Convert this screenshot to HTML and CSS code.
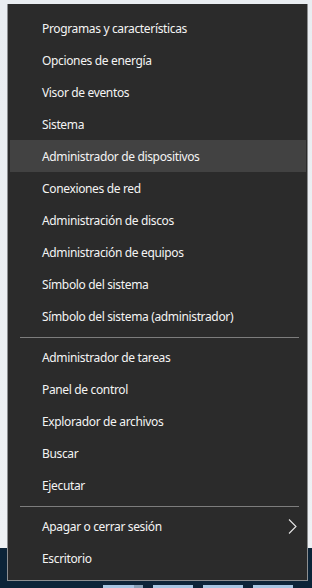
FILE: index.html
```html
<!DOCTYPE html>
<html lang="es">
<head>
<meta charset="utf-8">
<title>Menú</title>
<link rel="stylesheet" href="styles.css">
</head>
<body>
<div class="screen">
  <div class="menu">
    <ul class="group">
      <li class="item">Programas y características</li>
      <li class="item">Opciones de energía</li>
      <li class="item">Visor de eventos</li>
      <li class="item">Sistema</li>
      <li class="item active">Administrador de dispositivos</li>
      <li class="item">Conexiones de red</li>
      <li class="item">Administración de discos</li>
      <li class="item">Administración de equipos</li>
      <li class="item">Símbolo del sistema</li>
      <li class="item">Símbolo del sistema (administrador)</li>
    </ul>
    <div class="sep"></div>
    <ul class="group">
      <li class="item">Administrador de tareas</li>
      <li class="item">Panel de control</li>
      <li class="item">Explorador de archivos</li>
      <li class="item">Buscar</li>
      <li class="item">Ejecutar</li>
    </ul>
    <div class="sep"></div>
    <ul class="group">
      <li class="item has-sub">Apagar o cerrar sesión
        <svg class="chev" width="9" height="15" viewBox="0 0 9 15"><path d="M1 0.5 L8 7.5 L1 14.5" fill="none" stroke="#e6e6e6" stroke-width="1.1"/></svg>
      </li>
      <li class="item">Escritorio</li>
    </ul>
  </div>
  <div class="taskbar">
    <span class="tb tb1"></span>
    <span class="tb"></span>
    <span class="tb"></span>
    <span class="tb"></span>
  </div>
</div>
</body>
</html>
```

FILE: styles.css
```css
* { box-sizing: border-box; }
html, body { margin: 0; padding: 0; }
body { background: #0c2438; }
.screen {
  width: 312px;
  height: 588px;
  overflow: hidden;
  display: flex;
  flex-direction: column;
  background:
    linear-gradient(to bottom, #e9edf1 0, #eef1f4 548px, #0c2438 548px, #0c2438 100%);
  padding-top: 4px;
}
.menu {
  margin: 0 4px 0 7px;
  height: 578px;
  background: #2b2b2b;
  border: 1px solid #8d8f91;
  border-top: 0;
  padding: 8px 1px 0 2px;
  font-family: "Noto Sans", "Open Sans", sans-serif;
  font-size: 12px;
  letter-spacing: -0.35px;
  color: #f4f4f4;
}
.group { list-style: none; margin: 0; padding: 0; }
.item {
  height: 32px;
  display: flex;
  align-items: center;
  padding-left: 32px;
  padding-right: 8px;
  white-space: nowrap;
}
.item.active { background: #424242; }
.has-sub { justify-content: space-between; }
.chev { display: block; margin-right: 1px; }
.sep {
  height: 1px;
  background: #7d7d7d;
  margin: 5px 7px 3px 10px;
}
.taskbar {
  display: flex;
  gap: 10px;
  padding: 4px 0 0 103px;
}
.tb {
  display: block;
  width: 40px;
  height: 3px;
  background: #a8c6e2;
}
.tb1 { background: linear-gradient(to right, #a8c6e2 0, #a8c6e2 78%, #8aa2b8 78%); }
```
